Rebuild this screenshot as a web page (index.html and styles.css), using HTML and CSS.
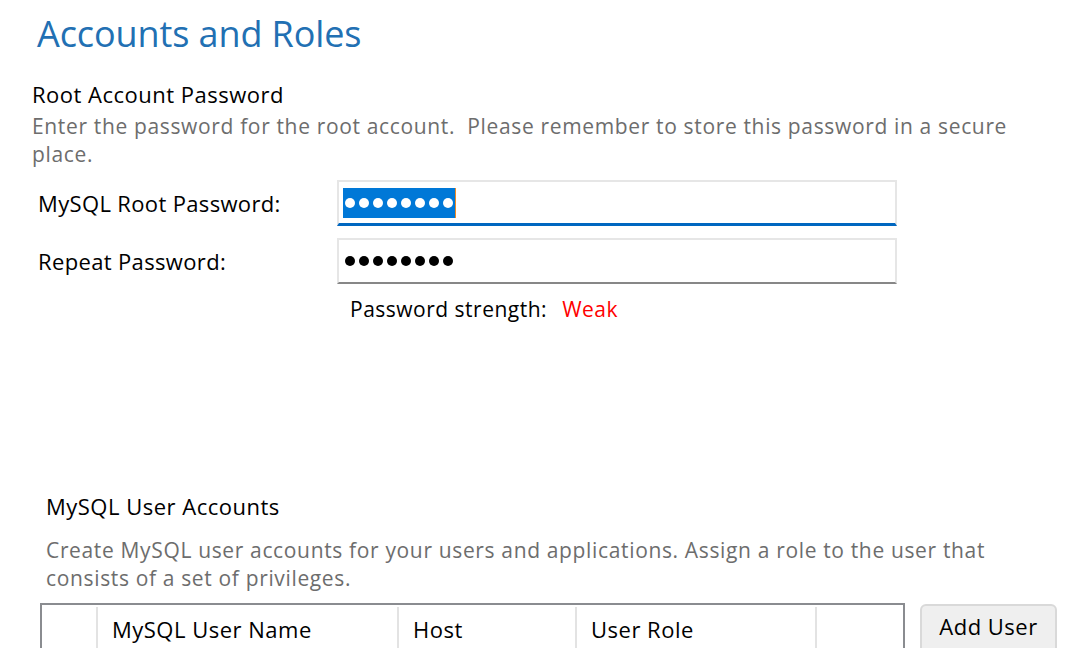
FILE: index.html
```html
<!DOCTYPE html>
<html>
<head>
<meta charset="utf-8">
<link rel="stylesheet" href="styles.css">
</head>
<body>
<div class="page">
  <h1 class="title">Accounts and Roles</h1>
  <section class="root">
    <h2 class="sec-title">Root Account Password</h2>
    <p class="desc">Enter the password for the root account.&nbsp; Please remember to store this password in a secure<br>place.</p>
    <div class="form">
      <div class="row">
        <label class="lbl">MySQL Root Password:</label>
        <div class="input focused">
          <span class="sel"><i></i><i></i><i></i><i></i><i></i><i></i><i></i><i></i></span><span class="caret"></span>
        </div>
      </div>
      <div class="row">
        <label class="lbl">Repeat Password:</label>
        <div class="input">
          <span class="dots"><i></i><i></i><i></i><i></i><i></i><i></i><i></i><i></i></span>
        </div>
      </div>
      <div class="strength">Password strength:<span class="weak">Weak</span></div>
    </div>
  </section>
  <section class="users">
    <h2 class="sec-title">MySQL User Accounts</h2>
    <p class="desc">Create MySQL user accounts for your users and applications. Assign a role to the user that<br>consists of a set of privileges.</p>
    <div class="users-body">
      <div class="table">
        <div class="th c0"></div>
        <div class="th c1">MySQL User Name</div>
        <div class="th c2">Host</div>
        <div class="th c3">User Role</div>
        <div class="th c4"></div>
      </div>
      <button class="btn">Add User</button>
    </div>
  </section>
</div>
</body>
</html>
```
FILE: styles.css
```css
html, body {
  margin: 0;
  padding: 0;
  background: #ffffff;
  overflow: hidden;
}
body {
  font-family: "Open Sans", "Noto Sans", sans-serif;
  color: #000;
  width: 1066px;
  height: 648px;
  letter-spacing: 0.5px;
}
.page {
  display: flex;
  flex-direction: column;
  padding-top: 12px;
}
.title {
  margin: 0 0 0 37px;
  font-size: 36px;
  line-height: 44px;
  font-weight: 400;
  letter-spacing: -0.1px;
  color: #2270b3;
}
.root {
  display: flex;
  flex-direction: column;
  padding-left: 32px;
  margin-top: 24px;
}
.sec-title {
  margin: 0;
  font-size: 22px;
  line-height: 28px;
  font-weight: 400;
  color: #000;
}
.desc {
  margin: 4px 0 0 0;
  font-size: 21px;
  line-height: 28px;
  letter-spacing: 0.65px;
  color: #6d6d6d;
}
.form {
  display: flex;
  flex-direction: column;
  gap: 12px;
  margin-top: 12px;
}
.row {
  display: flex;
  align-items: center;
}
.lbl {
  box-sizing: border-box;
  width: 305px;
  padding-left: 6px;
  font-size: 22px;
  line-height: 28px;
  letter-spacing: 0.35px;
}
.input {
  box-sizing: border-box;
  width: 560px;
  height: 46px;
  border: 2px solid #e6e6e6;
  border-bottom: 2px solid #878787;
  display: flex;
  align-items: center;
  padding-left: 4px;
}
.input.focused {
  border-bottom: 3px solid #0067c0;
  padding-top: 1px;
}
.sel {
  display: flex;
  align-items: center;
  gap: 4px;
  height: 30px;
  padding: 0 2px;
  background: #0078d7;
}
.sel i, .dots i {
  display: block;
  width: 10px;
  height: 10px;
  border-radius: 50%;
  background: #fff;
}
.caret {
  width: 1px;
  height: 30px;
  background: #f08a24;
}
.dots {
  display: flex;
  gap: 4px;
  padding-left: 2px;
}
.dots i {
  background: #000;
}
.strength {
  margin-left: 318px;
  font-size: 21px;
  line-height: 28px;
  margin-top: -1px;
}
.weak {
  color: #ff0000;
  margin-left: 15px;
}
.users {
  display: flex;
  flex-direction: column;
  margin-top: 169px;
  padding-left: 40px;
}
.users .sec-title, .users .desc {
  margin-left: 6px;
}
.users .desc {
  margin-top: 16px;
}
.users-body {
  display: flex;
  align-items: flex-start;
  margin-top: 11px;
  gap: 15px;
}
.table {
  box-sizing: border-box;
  width: 865px;
  height: 80px;
  border: 2px solid #8a8c90;
  display: flex;
}
.th {
  box-sizing: border-box;
  border-right: 2px solid #e3e3e3;
  font-size: 22px;
  line-height: 28px;
  padding: 8px 0 0 14px;
  margin-top: 2px;
}
.c0 { width: 56px; }
.c1 { width: 301px; }
.c2 { width: 178px; }
.c3 { width: 240px; }
.c4 { flex: 1; border-right: none; }
.btn {
  box-sizing: border-box;
  width: 137px;
  height: 60px;
  margin-top: 1px;
  border: 2px solid #d9d9d9;
  border-radius: 6px;
  background: #efefef;
  font-family: inherit;
  font-size: 22px;
  line-height: 28px;
  letter-spacing: 0.5px;
  color: #000;
  padding: 6px 0 0 0;
  text-align: center;
  display: flex;
  justify-content: center;
  align-items: flex-start;
}
```
